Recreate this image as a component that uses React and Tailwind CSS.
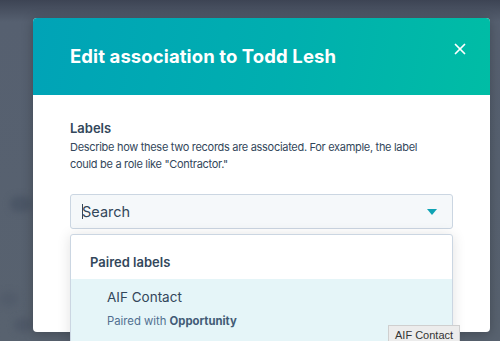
import { X } from 'lucide-react';

const App = () => {
  return (
    <div
      className="relative w-[500px] h-[341px] overflow-hidden bg-[linear-gradient(to_bottom,#3d4454_0px,#566070_22px,#58626f_100%)] font-['Inter',sans-serif]"
    >
      {/* blurred page behind the overlay */}
      <div className="absolute left-[10px] top-[196px] w-[22px] h-[16px] rounded-full bg-[#4b5666] blur-[3px]" />
      <div className="absolute left-[0px] top-[292px] w-[18px] h-[14px] rounded-full bg-[#525c6b] blur-[3px]" />
      <div className="absolute left-[14px] top-[318px] w-[18px] h-[14px] rounded-full bg-[#4f5968] blur-[3px]" />

      <div className="relative ml-[33px] mt-[18px] w-[457px] h-[314px] bg-white rounded-[4px] shadow-[0_2px_12px_rgba(0,0,0,0.25)]">
        <div className="h-[77px] flex items-center justify-between pl-[37px] pr-[21px] rounded-t-[4px] bg-[linear-gradient(100deg,#00a3b7_0%,#00afaf_55%,#00bda5_100%)]">
          <h1 className="text-[18.5px] font-bold text-white tracking-[0.1px]">Edit association to Todd Lesh</h1>
          <button className="self-start mt-[22px] text-white" aria-label="Close">
            <X size={18} strokeWidth={2.3} />
          </button>
        </div>

        <div className="px-[37px] pt-[24px]">
          <div className="text-[13px] leading-[18px] font-semibold text-[#33475b]">Labels</div>
          <p className="mt-[2px] text-[11px] leading-[17px] tracking-[-0.3px] text-[#33475b] whitespace-nowrap">
            Describe how these two records are associated. For example, the label
            <br />
            could be a role like "Contractor."
          </p>

          <div className="mt-[21px] h-[35px] flex items-center justify-between pl-[11px] pr-[15px] bg-[#f5f8fa] border border-[#cbd6e2] rounded-[3px]">
            <div className="flex items-center text-[14.5px] text-[#33475b]">
              <span className="w-px h-[15px] bg-[#33475b] mr-[-1px]" />
              <span>Search</span>
            </div>
            <svg width="10" height="6" viewBox="0 0 10 6">
              <path d="M0 0 L10 0 L5 6 Z" fill="#0fa3b4" />
            </svg>
          </div>
        </div>

        {/* dropdown menu */}
        <div className="absolute left-[37px] top-[216px] w-[383px] h-[140px] bg-white border border-[#cbd6e2] rounded-[3px] shadow-[0_1px_14px_rgba(0,0,0,0.12)]">
          <div className="h-[44px] pl-[19px] pt-[18px] text-[13px] leading-[18px] font-semibold text-[#33475b]">Paired labels</div>
          <div className="h-[80px] bg-[#e5f5f8] pl-[36px] pt-[8px]">
            <div className="text-[13.5px] leading-[20px] text-[#33475b]">AIF Contact</div>
            <div className="mt-[6px] text-[11.3px] leading-[16px] text-[#516f90]">
              Paired with <span className="font-bold text-[#425b76]">Opportunity</span>
            </div>
          </div>
        </div>
      </div>

      {/* native tooltip */}
      <div className="absolute left-[388px] top-[325px] h-[22px] px-[6px] pt-[1px] bg-[#ececec] border border-[#cfcfcf] text-[11px] leading-[16px] text-[#333] font-['Liberation_Sans',sans-serif]">
        AIF Contact
      </div>
    </div>
  );
};

export default App;
